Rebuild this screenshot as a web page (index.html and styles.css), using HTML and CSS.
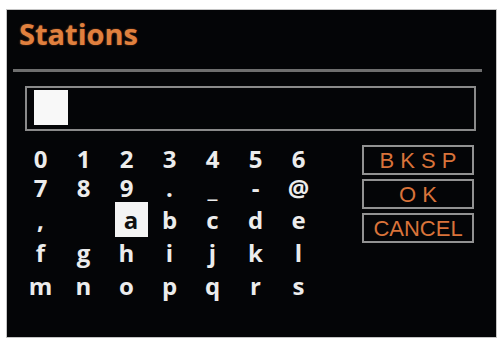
FILE: index.html
```html
<!DOCTYPE html>
<html>
<head>
<meta charset="utf-8">
<link rel="stylesheet" href="styles.css">
</head>
<body>
<div class="screen">
  <div class="title">Stations</div>
  <div class="sep"></div>
  <div class="input"><div class="cursor"></div></div>
  <div class="bottom">
    <div class="keys">
      <span>0</span><span>1</span><span>2</span><span>3</span><span>4</span><span>5</span><span>6</span>
      <span>7</span><span>8</span><span>9</span><span>.</span><span>_</span><span>-</span><span>@</span>
      <span>,</span><span>&nbsp;</span><span class="sel">a</span><span>b</span><span>c</span><span>d</span><span>e</span>
      <span>f</span><span>g</span><span>h</span><span>i</span><span>j</span><span>k</span><span>l</span>
      <span>m</span><span>n</span><span>o</span><span>p</span><span>q</span><span>r</span><span>s</span>
    </div>
    <div class="buttons">
      <div class="btn">B K S P</div>
      <div class="btn">O K</div>
      <div class="btn">CANCEL</div>
    </div>
  </div>
</div>
</body>
</html>
```

FILE: styles.css
```css
html, body {
  margin: 0;
  padding: 0;
  background: #ffffff;
}
body {
  width: 498px;
  height: 339px;
  overflow: hidden;
}
.screen {
  margin: 10px 0 0 7px;
  width: 489px;
  height: 327px;
  background: #040507;
  box-shadow: 0 0 0 1px #c4c4c4;
  display: flex;
  flex-direction: column;
}
.title {
  margin: 7px 0 0 12px;
  font-family: "Open Sans", sans-serif;
  font-weight: 700;
  font-size: 29px;
  line-height: 34px;
  height: 34px;
  color: #e0803e;
  text-shadow: 0 0 2px rgba(230, 120, 50, 0.5);
}
.sep {
  margin: 18px 14px 0 6px;
  height: 3px;
  background: #6e6e6e;
}
.input {
  margin: 14px 0 0 18px;
  width: 451px;
  height: 45px;
  box-sizing: border-box;
  border: 2px solid #8a8a8a;
  padding: 2px 0 0 7px;
}
.cursor {
  width: 34px;
  height: 35px;
  background: #f8f8f8;
}
.bottom {
  display: flex;
  align-items: flex-start;
  margin-top: 13px;
}
.keys {
  margin-left: 12px;
  display: grid;
  grid-template-columns: repeat(7, 43px);
  grid-template-rows: 29px 32px 33px 33px 33px;
  font-family: "Open Sans", sans-serif;
  font-weight: 700;
  font-size: 24px;
  color: #ececec;
}
.keys span {
  align-self: start;
  line-height: 29px;
  text-align: center;
}
.keys .sel {
  justify-self: center;
  width: 33px;
  height: 35px;
  line-height: 35px;
  margin: -3px 0 0 9px;
  background: #f4f4f4;
  color: #111111;
}
.buttons {
  margin: 1px 0 0 42px;
  display: flex;
  flex-direction: column;
  gap: 4px;
}
.btn {
  width: 112px;
  height: 30px;
  box-sizing: border-box;
  border: 2px solid #929292;
  padding-top: 2px;
  font-family: "Liberation Sans", Arial, sans-serif;
  font-size: 22px;
  line-height: 24px;
  text-align: center;
  color: #d9733a;
}
```
